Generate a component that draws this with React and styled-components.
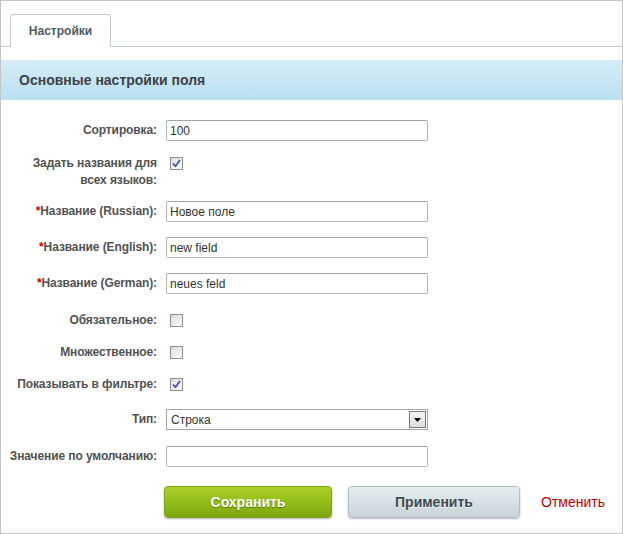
import React from "react";
import styled, { createGlobalStyle } from "styled-components";

const Global = createGlobalStyle`
  html, body { margin: 0; padding: 0; background: #fff; }
  body { font-family: "Liberation Sans", Arial, sans-serif; }
  * { box-sizing: border-box; }
`;

const Frame = styled.div`
  width: 623px;
  height: 534px;
  border: 1px solid #c4c4c4;
  background: #fff;
  overflow: hidden;
`;

const TabBar = styled.div`
  display: flex;
  padding: 13px 0 0 9px;
  height: 46px;
  border-bottom: 1px solid #c2cbd0;
`;

const Tab = styled.div`
  width: 101px;
  height: 33px;
  margin-bottom: -1px;
  border: 1px solid #c2cbd0;
  border-bottom: none;
  border-radius: 4px 4px 0 0;
  background: #fff;
  display: flex;
  align-items: center;
  justify-content: center;
  font-size: 12px;
  font-weight: bold;
  color: #4e5964;
`;

const SectionHeader = styled.div`
  margin-top: 13px;
  height: 40px;
  padding-left: 18px;
  display: flex;
  align-items: center;
  background: linear-gradient(to bottom, #d6edf7 0%, #b8e0f0 100%);
  font-size: 14px;
  font-weight: bold;
  color: #3c4248;
`;

const Form = styled.div`
  display: flex;
  flex-direction: column;
  padding-top: 20px;
`;

const Row = styled.div`
  display: grid;
  grid-template-columns: 156px 262px;
  column-gap: 9px;
  align-items: ${(p) => (p.$top ? "start" : "center")};
  min-height: 21px;
  margin-top: ${(p) => p.$mt || 0}px;
`;

const Label = styled.div`
  text-align: right;
  font-size: 12px;
  font-weight: bold;
  color: #525252;
  line-height: 17px;
  letter-spacing: -0.1px;
`;

const Req = styled.span`
  color: #d20000;
`;

const Input = styled.input`
  width: 262px;
  height: 21px;
  border: 1px solid #b5b5b5;
  border-top-color: #a3a3a3;
  border-radius: 2px;
  padding: 0 3px;
  font-family: "Liberation Sans", Arial, sans-serif;
  font-size: 12px;
  color: #333;
  outline: none;
  background: #fff;
`;

const CheckBox = styled.span`
  width: 13px;
  height: 13px;
  margin-left: 4px;
  margin-top: ${(p) => p.$mt || 0}px;
  border: 1px solid #8e8f8f;
  background: linear-gradient(135deg, #dcdcdc 0%, #fbfbfb 100%);
  display: flex;
  align-items: center;
  justify-content: center;
`;

const Select = styled.div`
  width: 262px;
  height: 21px;
  border: 1px solid #a5a5a5;
  display: flex;
  align-items: stretch;
  justify-content: space-between;
  font-size: 12px;
  color: #333;
  background: #fff;
`;

const SelectValue = styled.span`
  display: flex;
  align-items: center;
  padding-left: 4px;
`;

const SelectArrow = styled.span`
  width: 17px;
  margin: 1px;
  border: 1px solid #7a7a7a;
  background: linear-gradient(to bottom, #f4f4f4, #dedede);
  display: flex;
  align-items: center;
  justify-content: center;
`;

const Buttons = styled.div`
  display: flex;
  align-items: center;
  padding-left: 163px;
  margin-top: 19px;
`;

const Button = styled.button`
  height: 32px;
  width: ${(p) => p.$w}px;
  border-radius: 4px;
  font-family: "Liberation Sans", Arial, sans-serif;
  font-size: 14px;
  font-weight: bold;
  cursor: pointer;
  box-shadow: 0 1px 2px rgba(0, 0, 0, 0.3);
  ${(p) =>
    p.$primary
      ? `
    border: 1px solid #7aa510;
    background: linear-gradient(to bottom, #acd02a 0%, #93bd18 50%, #7ca712 100%);
    color: #fff;
    text-shadow: 0 1px 1px rgba(60, 80, 0, 0.6);
  `
      : `
    border: 1px solid #b2bec3;
    background: linear-gradient(to bottom, #e6edf0 0%, #d4dee2 60%, #c7d3d8 100%);
    color: #3f4a4f;
    text-shadow: 0 1px 0 rgba(255,255,255,0.6);
  `}
  margin-right: ${(p) => p.$mr || 0}px;
`;

const CancelLink = styled.a`
  font-size: 14px;
  color: #c30000;
  text-decoration: none;
  cursor: pointer;
`;

const Check = ({ checked, mt }) => (
  <CheckBox $mt={mt}>
    {checked && (
      <svg width="9" height="9" viewBox="0 0 9 9">
        <path d="M1 4.5 L3.5 7.2 L8 1" fill="none" stroke="#3f519a" strokeWidth="1.7" />
      </svg>
    )}
  </CheckBox>
);

export default function App() {
  return (
    <Frame>
      <Global />
      <TabBar>
        <Tab>Настройки</Tab>
      </TabBar>
      <SectionHeader>Основные настройки поля</SectionHeader>
      <Form>
        <Row>
          <Label>Сортировка:</Label>
          <Input defaultValue="100" />
        </Row>
        <Row $mt={14} $top>
          <Label>
            Задать названия для
            <br />
            всех языков:
          </Label>
          <Check checked mt={2} />
        </Row>
        <Row $mt={12}>
          <Label>
            <Req>*</Req>Название (Russian):
          </Label>
          <Input defaultValue="Новое поле" />
        </Row>
        <Row $mt={15}>
          <Label>
            <Req>*</Req>Название (English):
          </Label>
          <Input defaultValue="new field" />
        </Row>
        <Row $mt={15}>
          <Label>
            <Req>*</Req>Название (German):
          </Label>
          <Input defaultValue="neues feld" />
        </Row>
        <Row $mt={16}>
          <Label>Обязательное:</Label>
          <Check />
        </Row>
        <Row $mt={11}>
          <Label>Множественное:</Label>
          <Check />
        </Row>
        <Row $mt={11}>
          <Label>Показывать в фильтре:</Label>
          <Check checked />
        </Row>
        <Row $mt={14}>
          <Label>Тип:</Label>
          <Select>
            <SelectValue>Строка</SelectValue>
            <SelectArrow>
              <svg width="7" height="4" viewBox="0 0 7 4">
                <path d="M0 0 H7 L3.5 4 Z" fill="#000" />
              </svg>
            </SelectArrow>
          </Select>
        </Row>
        <Row $mt={16}>
          <Label>Значение по умолчанию:</Label>
          <Input defaultValue="" />
        </Row>
        <Buttons>
          <Button $primary $w={168} $mr={16}>
            Сохранить
          </Button>
          <Button $w={172} $mr={21}>
            Применить
          </Button>
          <CancelLink>Отменить</CancelLink>
        </Buttons>
      </Form>
    </Frame>
  );
}
